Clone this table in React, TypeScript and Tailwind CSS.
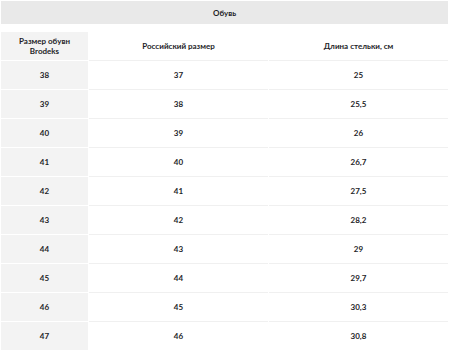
import React from "react";

const rows: [string, string, string][] = [
  ["38", "37", "25"],
  ["39", "38", "25,5"],
  ["40", "39", "26"],
  ["41", "40", "26,7"],
  ["42", "41", "27,5"],
  ["43", "42", "28,2"],
  ["44", "43", "29"],
  ["45", "44", "29,7"],
  ["46", "45", "30,3"],
  ["47", "46", "30,8"],
];

export default function App() {
  return (
    <div
      className="w-[450px] h-[350px] overflow-hidden bg-white pt-px pl-px pr-[2px] text-[#1e1e28]"
      style={{ fontFamily: "Lato, 'Open Sans', sans-serif" }}
    >
      <div className="h-[23px] bg-[#e9e9e9] flex items-center justify-center text-[8px] font-bold">
        Обувь
      </div>
      <div className="mt-[8px] grid grid-cols-[87px_179px_1fr] gap-x-px text-[8px] font-bold">
        <div className="h-[29px] bg-[#f3f3f3] border-b border-white flex items-center justify-center text-center leading-[10px]">
          Размер обувн
          <br />
          Brodeks
        </div>
        <div className="h-[29px] border-b border-[#f0f0f0] flex items-center justify-center">
          Российский размер
        </div>
        <div className="h-[29px] border-b border-[#f0f0f0] flex items-center justify-center">
          Длина стельки, см
        </div>
        {rows.map((r) => (
          <React.Fragment key={r[0]}>
            <div className="h-[29px] bg-[#f3f3f3] border-b border-white flex items-center justify-center">
              {r[0]}
            </div>
            <div className="h-[29px] border-b border-[#f0f0f0] flex items-center justify-center">
              {r[1]}
            </div>
            <div className="h-[29px] border-b border-[#f0f0f0] flex items-center justify-center">
              {r[2]}
            </div>
          </React.Fragment>
        ))}
      </div>
    </div>
  );
}
